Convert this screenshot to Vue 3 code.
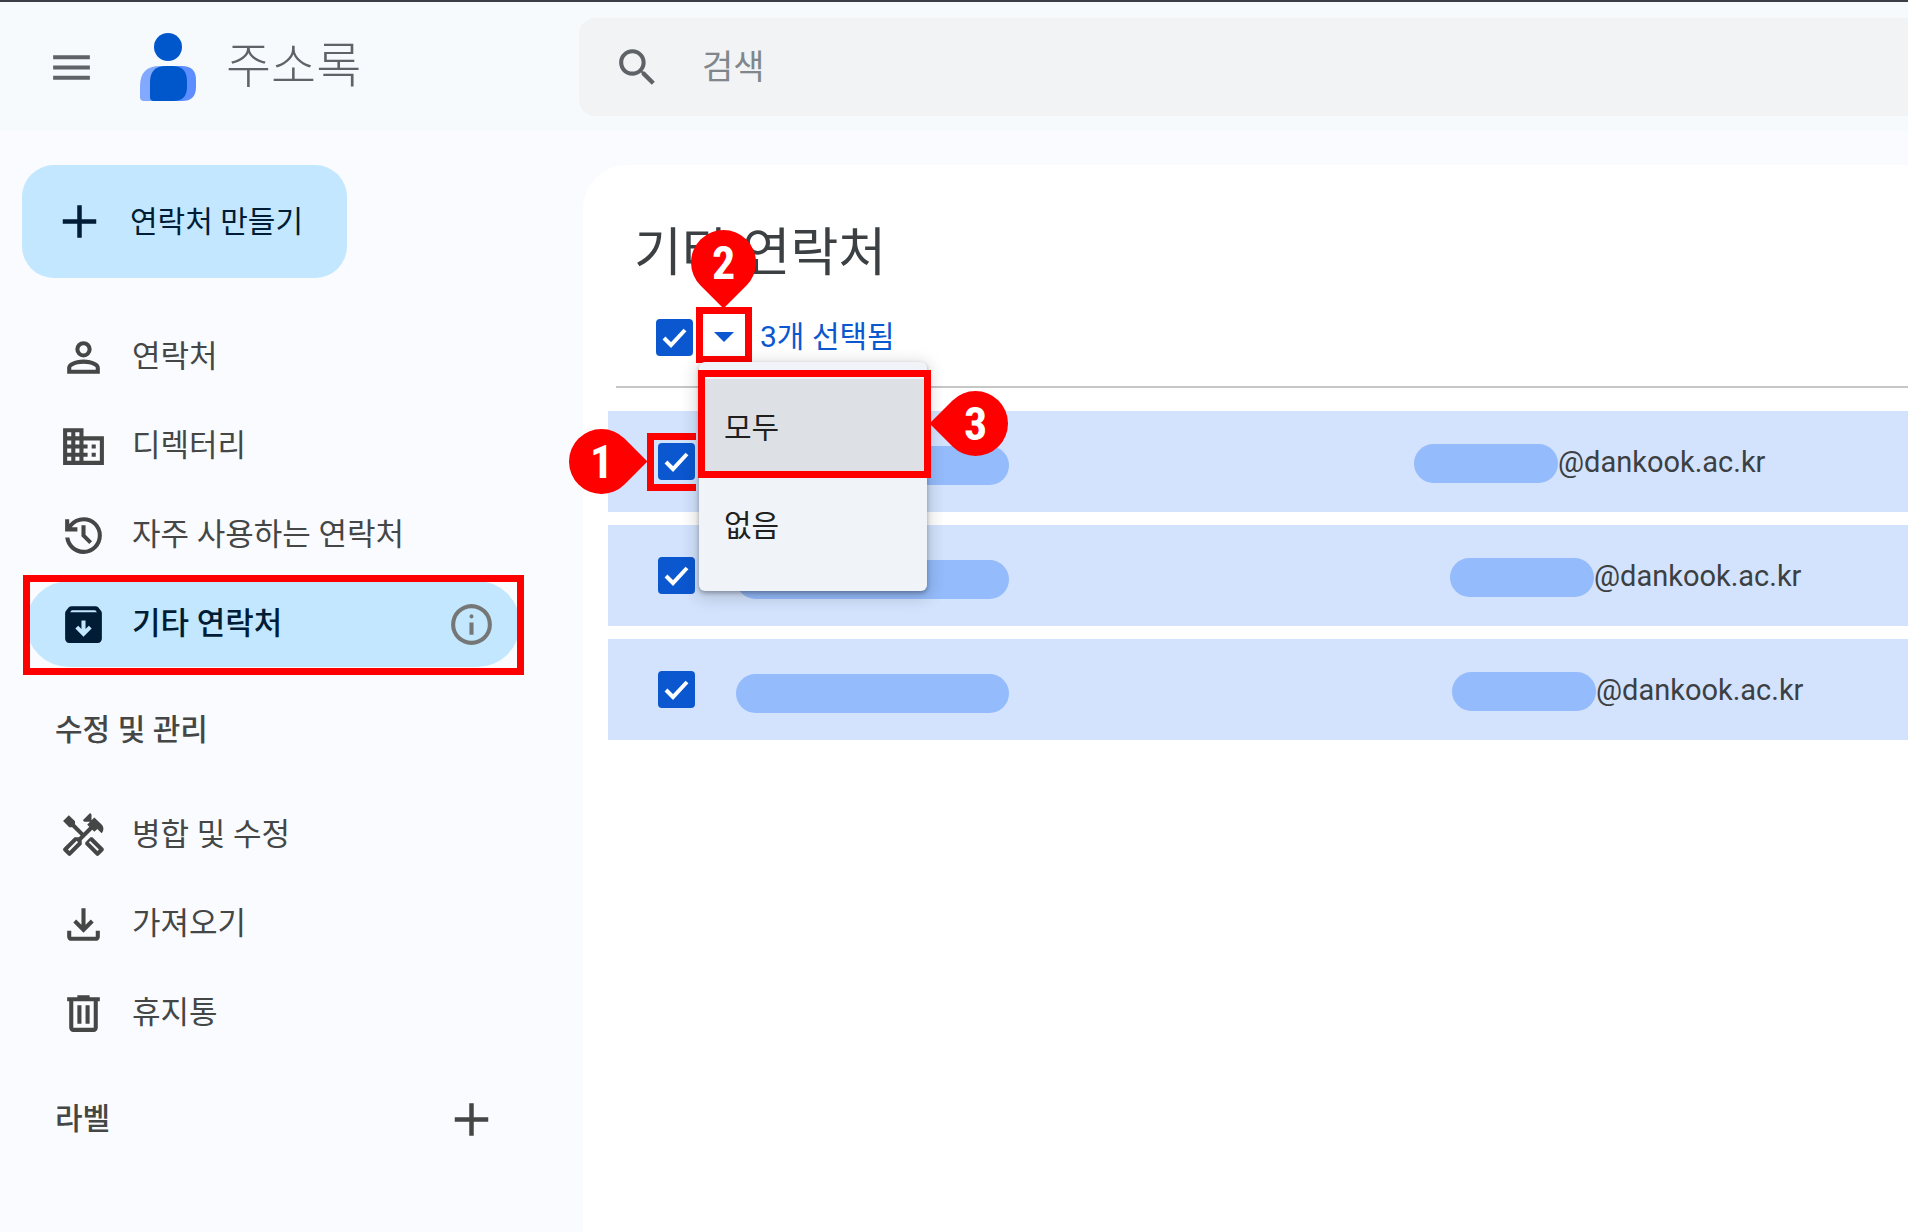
<script setup>
import { computed, ref } from 'vue';

const icons = {
    menu: "M120-240v-80h720v80H120Zm0-200v-80h720v80H120Zm0-200v-80h720v80H120Z",
    search: "M620-400h-32l-11-11c39-45 63-105 63-169 0-144-116-260-260-260S120-724 120-580s116 260 260 260c64 0 124-24 169-63l11 11v32l200 199 59-59-199-200Zm-240 0c-100 0-180-80-180-180s80-180 180-180 180 80 180 180-80 180-180 180Z",
    add: "M436-160v-276H152v-88h284v-276h88v276h284v88H524v276h-88Z",
    person: "M480-480q-66 0-113-47t-47-113q0-66 47-113t113-47q66 0 113 47t47 113q0 66-47 113t-113 47ZM160-160v-112q0-34 17.5-62.5T224-378q62-31 126-46.5T480-440q66 0 130 15.5T736-378q29 15 46.5 43.5T800-272v112H160Zm80-80h480v-32q0-11-5.5-20T700-306q-54-27-109-40.5T480-360q-56 0-111 13.5T260-306q-9 5-14.5 14t-5.5 20v32Zm240-320q33 0 56.5-23.5T560-640q0-33-23.5-56.5T480-720q-33 0-56.5 23.5T400-640q0 33 23.5 56.5T480-560Z",
    domain: "M480-680v-160H80v720h800v-560H480ZM240-200h-80v-80h80v80Zm0-160h-80v-80h80v80Zm0-160h-80v-80h80v80Zm0-160h-80v-80h80v80Zm160 480h-80v-80h80v80Zm0-160h-80v-80h80v80Zm0-160h-80v-80h80v80Zm0-160h-80v-80h80v80Zm400 480H480v-80h80v-80h-80v-80h80v-80h-80v-80h320v400Zm-80-320h-80v80h80v-80Zm0 160h-80v80h80v-80Z",
    history: "M480-120q-138 0-240.5-91.5T122-440h82q14 104 92.5 172T480-200q117 0 198.5-81.5T760-480q0-117-81.5-198.5T480-760q-69 0-129 32t-101 88h110v80H120v-240h80v94q51-64 124.5-99T480-840q75 0 140.5 28.5t114 77q48.5 48.5 77 114T840-480q0 75-28.5 140.5t-77 114q-48.5 48.5-114 77T480-120Zm112-192L440-464v-216h80v184l128 128-56 56Z",
    archive: "M200-120q-33 0-56.5-23.5T120-200v-499q0-14 4.5-27t13.5-24l50-61q11-14 27.5-21.5T250-840h460q18 0 34.5 7.5T772-811l50 61q9 11 13.5 24t4.5 27v499q0 33-23.5 56.5T760-120H200Zm16-600h528l-34-40H250l-34 40Zm264 480 160-160-56-56-64 64v-168h-80v168l-64-64-56 56 160 160Z",
    tools: "M867-233 655-445h-40L514-344v40l212 212c16 16 41 16 56 0l85-85c16-15 16-40 0-56Zm-113 57L584-346l28-28 170 170-28 28ZM694-552l56-57 85 85c47-47 47-123 0-170L693-835l-56 56v-113l-28-28-142 142 29 28h113l-57 57 43 42-116 116-165-165v-58L193-878 80-765l121 121h57l165 165-34 34h-85L92-233c-16 16-16 41 0 56l85 85c15 16 41 16 56 0l212-212v-85l206-206 43 43ZM374-346 205-177l-29-28 170-170 28 29Z",
    download: "M480-320 280-520l56-58 104 104v-326h80v326l104-104 56 58-200 200ZM240-160q-33 0-56.5-23.5T160-240v-120h80v120h480v-120h80v120q0 33-23.5 56.5T720-160H240Z",
    trash: "M280-120q-33 0-56.5-23.5T200-200v-520h-40v-80h200v-40h240v40h200v80h-40v520q0 33-23.5 56.5T680-120H280Zm400-600H280v520h400v-520ZM360-280h80v-360h-80v360Zm160 0h80v-360h-80v360Z",
    info: "M440-280h80v-240h-80v240Zm40-320q17 0 28.5-11.5T520-640q0-17-11.5-28.5T480-680q-17 0-28.5 11.5T440-640q0 17 11.5 28.5T480-600Zm0 520q-83 0-156-31.5T197-197q-54-54-85.5-127T80-480q0-83 31.5-156T197-763q54-54 127-85.5T480-880q83 0 156 31.5T763-763q54 54 85.5 127T880-480q0 83-31.5 156T763-197q-54 54-127 85.5T480-80Zm0-80q134 0 227-93t93-227q0-134-93-227t-227-93q-134 0-227 93t-93 227q0 134 93 227t227 93Z",
}

const mainLinks = [
    { icon: "person", label: "연락처" },
    { icon: "domain", label: "디렉터리" },
    { icon: "history", label: "자주 사용하는 연락처" },
    { icon: "archive", label: "기타 연락처", active: true },
]

const manageLinks = [
    { icon: "tools", label: "병합 및 수정" },
    { icon: "download", label: "가져오기" },
    { icon: "trash", label: "휴지통" },
]

// indent: where the hidden part of the address begins
const contacts = ref([
    { id: 1, domain: "@dankook.ac.kr", indent: 2, checked: true, step: true },
    { id: 2, domain: "@dankook.ac.kr", indent: 38, checked: true },
    { id: 3, domain: "@dankook.ac.kr", indent: 40, checked: true },
])

const query = ref("")
const menuOpen = ref(true)

const selectedCount = computed(() => contacts.value.filter(c => c.checked).length)

const allChecked = computed({
    get: () => selectedCount.value === contacts.value.length,
    set: (value) => selectAll(value),
})

function selectAll(value) {
    contacts.value.forEach(c => { c.checked = value })
}
</script>

<template>
    <div class="page">
        <header class="topbar">
            <div class="brand">
                <button class="icon-button" type="button" aria-label="기본 메뉴">
                    <svg class="icon" viewBox="0 -960 960 960"><path :d="icons.menu" /></svg>
                </button>
                <svg class="logo" viewBox="0 0 56 68" aria-hidden="true">
                    <path fill="#83a9ff" d="M20 33h14v35H4q-4 0-4-4V53Q0 33 20 33Z" />
                    <path fill="#5c8eff" d="M26 33h16q14 0 14 14v7q0 14-14 14H26Z" />
                    <path fill="#0057cc" d="M26 33h6q15 0 15 15v6q0 14-14 14H14q-4 0-4-4V49q0-16 16-16Z" />
                    <circle fill="#0057cc" cx="28" cy="14" r="14" />
                </svg>
                <span class="brand-name">주소록</span>
            </div>
            <form class="search" role="search" @submit.prevent>
                <button class="icon-button" type="submit" aria-label="검색">
                    <svg class="icon" viewBox="0 -960 960 960"><path :d="icons.search" /></svg>
                </button>
                <input v-model="query" class="search-input" type="text" name="q" placeholder="검색" aria-label="검색">
            </form>
        </header>

        <aside class="sidebar">
            <button class="create" type="button">
                <svg class="icon" viewBox="0 -960 960 960"><path :d="icons.add" /></svg>
                <span>연락처 만들기</span>
            </button>

            <nav class="links">
                <div v-for="link in mainLinks" :key="link.icon" class="link-row" :class="{ active: link.active }">
                    <a class="link" href="#">
                        <svg class="icon" viewBox="0 -960 960 960"><path :d="icons[link.icon]" /></svg>
                        <span>{{ link.label }}</span>
                    </a>
                    <button v-if="link.active" class="icon-button info" type="button" aria-label="정보">
                        <svg class="icon" viewBox="0 -960 960 960"><path :d="icons.info" /></svg>
                    </button>
                    <div v-if="link.active" class="frame frame-link"></div>
                </div>
            </nav>

            <h2 class="section">수정 및 관리</h2>
            <nav class="links">
                <div v-for="link in manageLinks" :key="link.icon" class="link-row">
                    <a class="link" href="#">
                        <svg class="icon" viewBox="0 -960 960 960"><path :d="icons[link.icon]" /></svg>
                        <span>{{ link.label }}</span>
                    </a>
                </div>
            </nav>

            <div class="section">
                <h2>라벨</h2>
                <button class="icon-button" type="button" aria-label="라벨 만들기">
                    <svg class="icon" viewBox="0 -960 960 960"><path :d="icons.add" /></svg>
                </button>
            </div>
        </aside>

        <main class="content">
            <h1>기타 연락처</h1>

            <div class="toolbar">
                <input v-model="allChecked" class="check" type="checkbox" aria-label="전체 선택">
                <div class="picker">
                    <button class="arrow" type="button" aria-label="선택 메뉴" @click="menuOpen = !menuOpen">
                        <svg viewBox="0 0 20 10"><path d="M0 0h20L10 10Z" /></svg>
                    </button>
                    <div class="frame frame-arrow"></div>
                    <div class="marker down"><span>2</span></div>
                    <div v-if="menuOpen" class="menu">
                        <button class="menu-item current" type="button" @click="selectAll(true)">모두</button>
                        <button class="menu-item" type="button" @click="selectAll(false)">없음</button>
                        <div class="frame frame-menu"></div>
                        <div class="marker left"><span>3</span></div>
                    </div>
                </div>
                <span class="count">{{ selectedCount }}개 선택됨</span>
            </div>

            <table class="contacts">
                <tbody>
                    <tr v-for="contact in contacts" :key="contact.id">
                        <td class="cell-check">
                            <div class="check-box">
                                <input v-model="contact.checked" class="check" type="checkbox" :aria-label="'연락처 ' + contact.id">
                                <template v-if="contact.step">
                                    <div class="frame frame-check"></div>
                                    <div class="marker right"><span>1</span></div>
                                </template>
                            </div>
                        </td>
                        <td class="cell-name"><div class="mask mask-name"></div></td>
                        <td>
                            <div class="email" :style="{ paddingLeft: contact.indent + 'px' }">
                                <div class="mask mask-email"></div>
                                <span>{{ contact.domain }}</span>
                            </div>
                        </td>
                    </tr>
                </tbody>
            </table>
        </main>
    </div>
</template>

<style>
body {
    background-color: #f9fbff;
}
</style>

<style scoped>
* {
    box-sizing: border-box;
}

.page {
    min-height: 100vh;
    display: grid;
    grid-template-columns: 583px minmax(0, 1fr);
    grid-template-rows: auto 1fr;
    overflow: hidden;
    font-family: Roboto, "Noto Sans CJK KR", sans-serif;
    font-size: 30px;
    line-height: 40px;
    color: #444746;
}

button {
    border: 0;
    padding: 0;
    background: none;
    font: inherit;
    color: inherit;
    cursor: pointer;
}

h1,
h2 {
    margin: 0;
}

.icon {
    display: block;
    flex: none;
    width: 49px;
    height: 49px;
    fill: currentColor;
}

.topbar {
    grid-column: 1 / -1;
    display: flex;
    padding: 16px 0 15px;
    border-top: 2px solid #3d3d47;
    background-color: #f6fafd;
    color: #5f6368;
}

.brand {
    display: flex;
    align-items: center;
    width: 579px;
    padding-left: 47px;
}

.logo {
    width: 56px;
    height: 68px;
    margin: 0 30px 0 44px;
}

.brand-name {
    font-size: 49px;
    font-weight: 300;
}

.search {
    flex: 1;
    display: flex;
    align-items: center;
    gap: 40px;
    height: 98px;
    padding-left: 34px;
    border-radius: 16px 0 0 16px;
    background-color: #f1f3f4;
}

.search-input {
    flex: 1;
    min-width: 0;
    border: 0;
    outline: 0;
    padding: 0;
    background: none;
    font-family: Roboto, "Noto Sans CJK KR", sans-serif;
    font-size: 34px;
    color: #3c4043;
}

.search-input::placeholder {
    color: #80868b;
    opacity: 1;
}

.sidebar {
    padding: 34px 0 40px 22px;
}

.create {
    display: flex;
    align-items: center;
    gap: 26px;
    width: 325px;
    height: 113px;
    padding-left: 33px;
    border-radius: 32px;
    background-color: #c2e7ff;
    color: #001d35;
}

.links {
    display: grid;
    gap: 3px;
    margin: 36px 63px 0 4px;
}

.link-row {
    position: relative;
    display: flex;
    align-items: center;
    height: 86px;
    padding: 0 24px 0 33px;
    border-radius: 43px;
}

.link {
    flex: 1;
    display: flex;
    align-items: center;
    gap: 24px;
    font-size: 31px;
    color: inherit;
    text-decoration: none;
}

.active {
    background-color: #c2e7ff;
    color: #001d35;
    font-weight: 500;
}

.info {
    color: #747775;
}

.section {
    display: flex;
    align-items: center;
    justify-content: space-between;
    height: 40px;
    margin: 43px 87px 0 33px;
    font-size: 30px;
    font-weight: 500;
}

.section h2 {
    font: inherit;
}

.section + .links {
    margin-top: 42px;
}

.content {
    padding-top: 57px;
    border-top-left-radius: 44px;
    margin-top: 34px;
    background-color: #fff;
}

.content h1 {
    padding-left: 51px;
    font-size: 52px;
    font-weight: 400;
    line-height: 64px;
    color: #3c4043;
}

.toolbar {
    display: flex;
    align-items: center;
    margin: 21px 0 0 33px;
    padding: 0 0 19px 40px;
    border-bottom: 2px solid #c4c7c5;
}

.check {
    appearance: none;
    display: block;
    flex: none;
    width: 37px;
    height: 37px;
    margin: 0;
    border: 3px solid #0b57d0;
    border-radius: 4px;
}

.check:checked {
    background: #0b57d0 url("data:image/svg+xml,%3Csvg xmlns='http://www.w3.org/2000/svg' viewBox='0 0 31 31'%3E%3Cpath d='M5 16l7 7L26 8' fill='none' stroke='white' stroke-width='4'/%3E%3C/svg%3E") center / 31px 31px no-repeat;
}

.picker {
    position: relative;
    z-index: 2;
    display: flex;
    width: 56px;
    height: 60px;
    margin: 0 8px 0 3px;
}

.arrow {
    flex: 1;
    display: grid;
    place-items: center;
}

.arrow svg {
    width: 20px;
    height: 10px;
    fill: #0b57d0;
}

.count {
    color: #0b57d0;
}

.menu {
    position: absolute;
    top: 55px;
    left: 3px;
    width: 228px;
    padding: 17px 0 16px;
    border-radius: 6px;
    background-color: #f0f4f9;
    box-shadow: 0 2px 4px rgba(0, 0, 0, 0.3), 0 4px 16px 4px rgba(0, 0, 0, 0.14);
    color: #1f1f1f;
}

.menu-item {
    display: block;
    width: 100%;
    height: 98px;
    padding-left: 25px;
    text-align: left;
}

.current {
    background-color: #dde1e6;
}

.contacts {
    width: calc(100% - 25px);
    margin: 10px 0 0 25px;
    table-layout: fixed;
    border-spacing: 0 13px;
}

.contacts td {
    height: 101px;
    padding: 0;
    background-color: #d3e3fd;
    color: #3c4043;
}

.contacts .cell-check {
    width: 128px;
    padding-left: 50px;
}

.contacts .cell-name {
    width: 52%;
}

.check-box {
    position: relative;
    width: 37px;
}

.mask {
    flex: none;
    height: 39px;
    border-radius: 20px;
    background-color: #94bbfb;
}

.mask-name {
    width: 273px;
    margin-top: 8px;
}

.mask-email {
    width: 144px;
    margin-top: 4px;
}

.email {
    display: flex;
    align-items: center;
    font-size: 29px;
}

/* Guide overlay: red frames and numbered steps */
.frame {
    position: absolute;
    border: 7px solid #f00;
    pointer-events: none;
}

.frame-link {
    inset: -6px -4px -8px -3px;
}

.frame-arrow {
    inset: 0 0 4px;
}

.frame-menu {
    top: 8px;
    left: -1px;
    width: 233px;
    height: 108px;
}

.frame-check {
    top: -10px;
    left: -11px;
    width: 49px;
    height: 58px;
    border-right: 0;
}

.marker {
    position: absolute;
    display: grid;
    place-items: center;
    width: 65px;
    height: 65px;
    font-family: "Liberation Sans Narrow", "Roboto Condensed", "Open Sans Condensed", "Liberation Sans", sans-serif;
    font-size: 46px;
    font-weight: 700;
    color: #fff;
    pointer-events: none;
}

.marker::before {
    content: "";
    position: absolute;
    inset: 0;
    border-radius: 50% 50% 0 50%;
    background-color: #f00;
    transform: rotate(45deg);
}

.marker span {
    position: relative;
}

.down {
    top: -77px;
    left: -5px;
}

.left {
    top: 29px;
    left: 244px;
}

.left::before {
    transform: rotate(135deg);
}

.right {
    top: -14px;
    left: -89px;
}

.right::before {
    transform: rotate(-45deg);
}
</style>
